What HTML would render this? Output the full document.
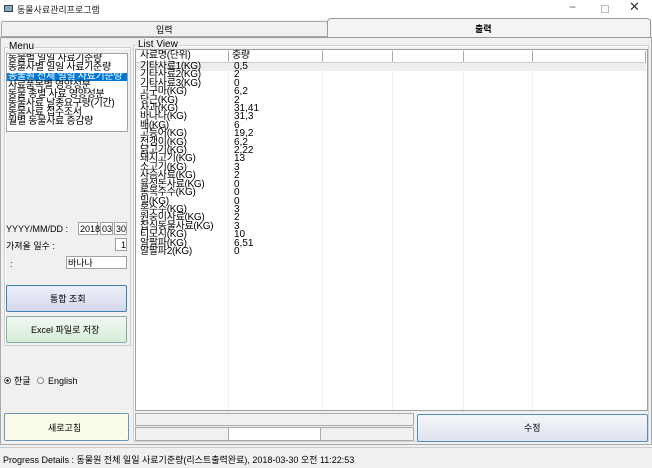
<!DOCTYPE html><html><head><meta charset="utf-8"><style>
*{margin:0;padding:0;box-sizing:border-box}
body{width:652px;height:468px;background:#f0f0f0;font-family:"Liberation Sans","Noto Sans CJK KR",sans-serif;position:relative;overflow:hidden;color:#000}
.a{position:absolute}
.t{font-size:10px;line-height:10px;white-space:nowrap}
.box{border:1px solid #a0a0a0;background:#fff}
.grp{border:1px solid #d0d0d0;box-shadow:inset 1px 1px 0 #fff}
.row{position:absolute;font-size:10px;line-height:8.4px;height:8.4px;white-space:nowrap;letter-spacing:-0.3px}
</style></head><body>
<div class="a" style="left:0;top:0;width:652px;height:20px;background:#fff"></div>
<div class="a" style="left:4px;top:5px;width:9px;height:7px;border:1px solid #345;background:#8ab"></div>
<div class="a t" style="left:17px;top:5px;font-size:9px;color:#222">동물사료관리프로그램</div>
<div class="a t" style="left:569px;top:2px;color:#666;font-size:12px">−</div>
<div class="a" style="left:601px;top:5px;width:8px;height:8px;border:1px solid #bbb"></div>
<div class="a t" style="left:629px;top:2px;color:#333;font-size:13px">✕</div>
<!-- tabs -->
<div class="a" style="left:1px;top:21px;width:327px;height:16px;border:1px solid #aaa;border-radius:3px 3px 0 0;background:#f0f0f0"></div>
<div class="a t" style="left:156px;top:25px;font-size:9px">입력</div>
<div class="a" style="left:327px;top:18px;width:324px;height:20px;border:1px solid #999;border-bottom:none;border-radius:4px 4px 0 0;background:#f4f4f4"></div>
<div class="a t" style="left:475px;top:24px;font-size:9px;font-weight:bold">출력</div>
<div class="a" style="left:0;top:37px;width:652px;height:408px;border:1px solid #aaa;border-top:1px solid #999"></div>
<!-- menu group -->
<div class="a grp" style="left:4px;top:47px;width:127px;height:299px"></div>
<div class="a t" style="left:8px;top:42px;background:#f0f0f0;padding:0 1px">Menu</div>
<div class="a box" style="left:6px;top:53px;width:122px;height:79px;overflow:hidden">
<div class="row" style="left:1px;top:1px">동물별 일일 사료기준량</div>
<div class="row" style="left:1px;top:10px">동물사별 일일 사료기준량</div>
<div class="row" style="left:0;top:19px;width:120px;background:#0078d7;color:#fff;padding-left:1px">동물원 전체 일일 사료기준량</div>
<div class="row" style="left:1px;top:28px">사료품목별 영양성분</div>
<div class="row" style="left:1px;top:37px">동물 종별 사료 영양성분</div>
<div class="row" style="left:1px;top:46px">동물사료 날종요구량(기간)</div>
<div class="row" style="left:1px;top:55px">동물사료 접수조서</div>
<div class="row" style="left:1px;top:64px">월별 동물사료 증감량</div>
</div>
<div class="a t" style="left:6px;top:224px;font-size:9px">YYYY/MM/DD :</div>
<div class="a box t" style="left:78px;top:222px;width:20px;height:13px;font-size:9px;padding:1px">2018</div>
<div class="a box t" style="left:100px;top:222px;width:13px;height:13px;font-size:9px;padding:1px">03</div>
<div class="a box t" style="left:114px;top:222px;width:13px;height:13px;font-size:9px;padding:1px">30</div>
<div class="a t" style="left:6px;top:241px;font-size:9px">가져올 일수 :</div>
<div class="a box t" style="left:115px;top:238px;width:12px;height:13px;font-size:9px;padding:1px 0 0 5px">1</div>
<div class="a t" style="left:10px;top:259px;font-size:9px">:</div>
<div class="a box t" style="left:66px;top:256px;width:61px;height:13px;font-size:9px;padding:1px">바나나</div>
<div class="a" style="left:6px;top:285px;width:121px;height:27px;border:1px solid #3c7fb1;border-radius:2px;background:linear-gradient(#eef0f8,#d4d8ee)"></div>
<div class="a t" style="left:50px;top:294px;font-size:9px">통합 조회</div>
<div class="a" style="left:6px;top:316px;width:121px;height:27px;border:1px solid #8aa;border-radius:2px;background:linear-gradient(#f2f8f2,#d6edd8)"></div>
<div class="a t" style="left:31px;top:325px;font-size:9px">Excel 파일로 저장</div>
<div class="a" style="left:4px;top:377px;width:7px;height:7px;border:1px solid #555;border-radius:50%;background:radial-gradient(#222 35%,#fff 40%)"></div>
<div class="a t" style="left:14px;top:376px;font-size:9px">한글</div>
<div class="a" style="left:37px;top:377px;width:7px;height:7px;border:1px solid #888;border-radius:50%;background:#fff"></div>
<div class="a t" style="left:48px;top:376px;font-size:9px">English</div>
<div class="a" style="left:4px;top:413px;width:125px;height:28px;border:1px solid #6a98b8;border-radius:2px;background:#fbfbe9"></div>
<div class="a t" style="left:48px;top:423px;font-size:9px">새로고침</div>
<!-- list view -->
<div class="a grp" style="left:133px;top:45px;width:516px;height:397px"></div>
<div class="a t" style="left:137px;top:40px;background:#f0f0f0;padding:0 1px">List View</div>
<div class="a box" style="left:135px;top:49px;width:513px;height:362px;overflow:hidden">
<div class="a" style="left:0;top:0;width:510px;height:13px;background:#fff;border-bottom:1px solid #ccc"></div>
<div class="a" style="left:0;top:13px;width:510px;height:8.4px;background:#eee"></div>
<div class="a" style="left:92px;top:0;width:1px;height:362px;background:#eee"></div>
<div class="a" style="left:186px;top:0;width:1px;height:362px;background:#eee"></div>
<div class="a" style="left:256px;top:0;width:1px;height:362px;background:#eee"></div>
<div class="a" style="left:327px;top:0;width:1px;height:362px;background:#eee"></div>
<div class="a" style="left:396px;top:0;width:1px;height:362px;background:#eee"></div>
<div class="a" style="left:92px;top:1px;width:1px;height:11px;background:#aaa"></div>
<div class="a" style="left:186px;top:1px;width:1px;height:11px;background:#aaa"></div>
<div class="a" style="left:256px;top:1px;width:1px;height:11px;background:#aaa"></div>
<div class="a" style="left:327px;top:1px;width:1px;height:11px;background:#aaa"></div>
<div class="a" style="left:396px;top:1px;width:1px;height:11px;background:#aaa"></div>
<div class="a" style="left:509px;top:1px;width:1px;height:11px;background:#aaa"></div>
<div class="row" style="left:4px;top:2px">사료명(단위)</div><div class="row" style="left:96px;top:2px">중량</div>
<div style="position:absolute;left:0;top:13px;width:200px">
<div style="position:absolute;left:4px;top:0;font-size:10px;line-height:8.4px;white-space:nowrap;letter-spacing:-0.3px">기타사료1(KG)<br>기타사료2(KG)<br>기타사료3(KG)<br>고구마(KG)<br>당근(KG)<br>사과(KG)<br>바나나(KG)<br>배(KG)<br>고등어(KG)<br>전갱이(KG)<br>닭고기(KG)<br>돼지고기(KG)<br>소고기(KG)<br>사슴사료(KG)<br>육성돈사료(KG)<br>통옥수수(KG)<br>밀(KG)<br>옥수수(KG)<br>원숭이사료(KG)<br>잡식동물사료(KG)<br>티모시(KG)<br>알팔파(KG)<br>알팔파2(KG)</div>
<div style="position:absolute;left:98px;top:0;font-size:10px;line-height:8.4px;white-space:nowrap">0,5<br>2<br>0<br>6,2<br>2<br>31,41<br>31,3<br>6<br>19,2<br>6,2<br>2,22<br>13<br>3<br>2<br>0<br>0<br>0<br>3<br>2<br>3<br>10<br>6,51<br>0</div>
</div>
</div>
<div class="a" style="left:135px;top:413px;width:279px;height:13px;border:1px solid #aaa;background:#f0f0f0"></div>
<div class="a" style="left:135px;top:427px;width:279px;height:14px;border:1px solid #aaa;background:#f0f0f0"></div>
<div class="a" style="left:228px;top:428px;width:93px;height:12px;background:#fff;border-left:1px solid #aaa;border-right:1px solid #aaa"></div>
<div class="a" style="left:417px;top:414px;width:231px;height:28px;border:1px solid #5a8ab0;border-radius:2px;background:linear-gradient(#f4f6fa,#dde3ee)"></div>
<div class="a t" style="left:524px;top:423px;font-size:9px">수정</div>
<!-- status -->
<div class="a" style="left:0;top:447px;width:652px;height:1px;background:#ccc"></div>
<div class="a t" style="left:3px;top:455px;font-size:9px">Progress Details : 동물원 전체 일일 사료기준량(리스트출력완료), 2018-03-30 오전 11:22:53</div>
</body></html>
